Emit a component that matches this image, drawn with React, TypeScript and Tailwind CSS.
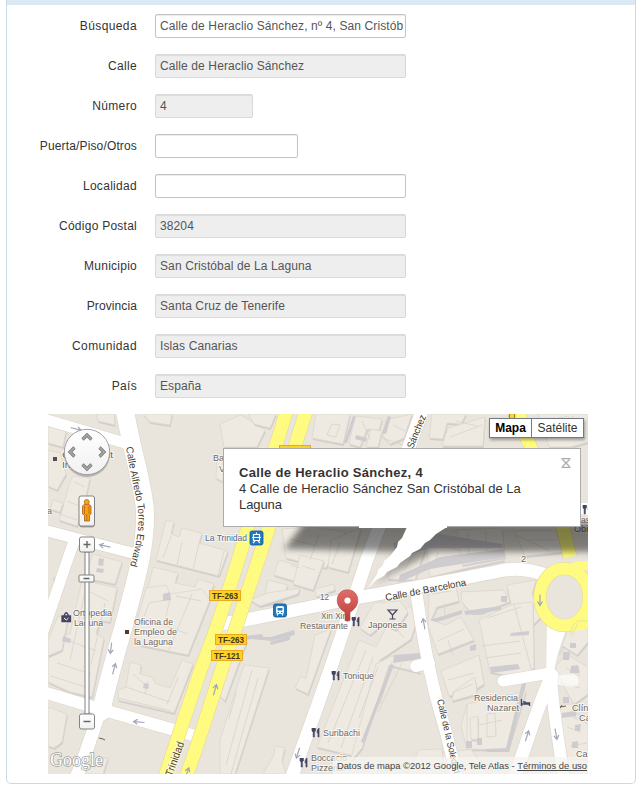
import React from "react";

const FONT = "font-['Liberation_Sans',Arial,sans-serif]";

type Field = { label: string; value: string; width: string; tracking: string; disabled: boolean };

const fields: Field[] = [
  { label: "Búsqueda", value: "Calle de Heraclio Sánchez, nº 4, San Cristób", width: "w-[251px]", tracking: "tracking-[0.4px]", disabled: false },
  { label: "Calle", value: "Calle de Heraclio Sánchez", width: "w-[251px]", tracking: "tracking-[0.35px]", disabled: true },
  { label: "Número", value: "4", width: "w-[98px]", tracking: "tracking-[0.35px]", disabled: true },
  { label: "Puerta/Piso/Otros", value: "", width: "w-[143px]", tracking: "tracking-[0.15px]", disabled: false },
  { label: "Localidad", value: "", width: "w-[251px]", tracking: "tracking-[0.3px]", disabled: false },
  { label: "Código Postal", value: "38204", width: "w-[251px]", tracking: "tracking-[0.25px]", disabled: true },
  { label: "Municipio", value: "San Cristóbal de La Laguna", width: "w-[251px]", tracking: "tracking-[0.25px]", disabled: true },
  { label: "Provincia", value: "Santa Cruz de Tenerife", width: "w-[251px]", tracking: "tracking-[0.1px]", disabled: true },
  { label: "Comunidad", value: "Islas Canarias", width: "w-[251px]", tracking: "tracking-[0.4px]", disabled: true },
  { label: "País", value: "España", width: "w-[251px]", tracking: "tracking-[0.3px]", disabled: true },
];

function FormRow({ label, value, width, tracking, disabled }: Field) {
  return (
    <div className="flex h-6 items-center gap-[18px]">
      <span className={`w-[130px] whitespace-nowrap text-right text-[12px] leading-6 text-[#333] ${tracking}`}>{label}</span>
      <div
        className={`flex h-6 items-center rounded-[2px] border pl-1 pr-0.5 ${width} ${
          disabled
            ? "border-[#d9d9d9] bg-[#eee] shadow-[inset_0_1px_1px_rgba(0,0,0,0.08)]"
            : "border-[#c4c4c4] bg-white shadow-[inset_0_1px_1px_rgba(0,0,0,0.08)]"
        }`}
      >
        <span className="w-full overflow-hidden whitespace-nowrap text-[12px] leading-5 tracking-[0.11px] text-[#555]">{value}</span>
      </div>
    </div>
  );
}

const buildings: string[] = [
  "48,426 66,431 63,447 48,443",
  "48,450 60,453 66,474 57,490 48,486",
  "73,476 90,478 82,514 77,526 59,520 70,482",
  "53,500 63,503 60,512 50,509",
  "96,414 114,414 115,425 98,421",
  "143,414 172,414 170,425 150,422",
  "217,460 223,455 223,482 216,478",
  "220,424 241,415 265,430 257,447 224,447",
  "248,414 276,414 270,428 254,424",
  "166,520 174,522 171,534 179,537 182,528 202,533 199,543 228,551 219,576 156,560",
  "153,567 178,573 175,583 195,587 198,579 214,584 207,606 147,592",
  "93,554 122,562 115,584 84,578",
  "82,580 117,588 110,622 100,620 96,634 104,638 92,697 70,692 48,682 48,660 60,636 70,634",
  "48,640 58,616 68,618 62,650 48,656",
  "146,588 166,585 170,594 202,589 210,600 188,655 140,645 134,632",
  "130,662 141,665 140,674 152,677 156,684 170,688 182,660 193,664 174,713 118,700 118,690 126,687",
  "48,707 67,714 62,742 54,748 48,746",
  "88,758 108,758 103,774 86,774",
  "316,414 350,414 343,444 312,438",
  "355,416 382,419 379,430 367,429 360,447 349,444",
  "371,429 382,431 378,447 366,447",
  "386,420 412,414 404,438 390,444 383,436",
  "432,414 466,414 461,424 447,423 443,439 429,438",
  "448,428 485,417 483,446 442,446",
  "538,414 588,414 588,442 571,447 549,447",
  "550,420 568,416 573,430 556,436",
  "282,529 313,527 345,532 326,568 286,558",
  "331,540 361,528 348,572 328,567",
  "279,560 303,567 297,582 274,575",
  "268,580 288,585 281,602 262,605",
  "300,555 324,561 313,590 293,584",
  "405,545 425,550 415,580 387,579",
  "426,543 457,550 489,549 505,560 463,569 430,577",
  "457,530 502,528 505,557 462,565",
  "514,531 556,531 563,552 525,556",
  "507,585 536,580 532,594 542,616 532,626 512,622",
  "250,600 267,593 300,588 298,594 260,606",
  "315,589 334,584 335,590 316,597",
  "220,619 235,633 247,641 225,701 220,696",
  "244,665 269,668 235,774 220,774 220,740",
  "315,635 331,629 308,694 295,688 301,676 306,679",
  "275,746 285,748 282,760 286,774 263,774 274,755",
  "359,640 376,647 390,620 410,606 417,620 411,639 380,660 354,756 317,747",
  "374,603 400,601 408,612 396,630 383,624 370,635 360,628",
  "376,664 392,656 408,657 421,673 389,665 362,748 350,762",
  "429,590 456,587 459,601 437,607 431,620 446,625 461,617 474,640 438,654 428,626",
  "461,592 503,590 511,601 481,613 471,613 462,602",
  "479,620 513,604 533,602 534,668 520,678 490,672",
  "441,671 479,655 484,684 476,689 449,696",
  "454,691 475,677 477,694 452,701",
  "467,704 526,691 508,750 467,749 461,726",
  "470,718 478,716 478,740 471,739",
  "434,755 471,749 488,774 437,774",
  "419,750 442,749 444,774 407,774",
  "571,620 588,620 588,642 577,655 563,646 559,655",
  "555,667 566,654 588,667 588,694 574,704 565,689",
  "559,704 575,704 574,718 588,724 588,774 571,774 562,733",
];

const creases: string[] = [
  "M74 482L85 487M67 501L79 506M60 514L77 520",
  "M171 536L163 558M182 542L177 565M199 543L193 570M224 551L218 576",
  "M84 589L108 601M76 615L100 622M67 640L96 651M57 663L91 674M51 676L89 688M85 592L70 660M105 603L91 665",
  "M149 603L170 599L164 625L142 622ZM176 596L201 601M192 594L169 650M164 625L188 634",
  "M126 687L170 702M133 674L149 688M148 681L145 694M178 677L167 704M118 698L171 711",
  "M332 424L340 425 336 437 327 435ZM362 421L370 439M393 425L405 431M456 421L477 426",
  "M450 437L482 425M551 439L580 424M572 416L585 439",
  "M290 539L318 546M319 534L310 560M340 543L332 564M291 565L300 568M303 566L315 570",
  "M414 553L405 569M438 551L434 569M468 534L469 560M486 531L487 560M528 540L556 540",
  "M252 670L226 765M258 678L231 774M236 693L229 719",
  "M366 650L328 743M373 657L341 748M392 662L380 704M378 667L359 718M402 663L378 712M393 624L404 638",
  "M432 594L451 591M444 603L445 616M438 641L464 629M448 640L453 655M487 618L521 607M482 646L520 641M485 658L521 653M514 604L532 672M510 604L508 589",
  "M448 680L474 673M452 693L473 684M467 704L467 750M487 714L495 713 496 736 487 737ZM479 725L502 720",
  "M566 668L580 676M561 683L580 688M570 711L583 716M567 727L581 732M570 746L587 743M568 759L586 760",
  "M382 438L412 448M394 451L410 459M516 535L550 551",
];

// Roof edges in deep shade and small roof structures.
const shades: string[] = [
  "248,637 271,637 294,630 295,635 272,641 252,639",
  "393,543 427,532 502,544 503,548 430,548 397,559",
  "400,575 440,557 504,549 505,557 430,569 398,583",
  "430,620 462,610 462,614 437,622",
  "464,611 501,606 501,610 466,615",
  "490,667 518,664 520,669 491,673",
  "501,596 507,596 507,602 501,602",
  "394,655 421,653 421,659 393,663",
  "391,664 394,665 364,743 361,742",
  "523,679 527,680 509,752 487,752 486,749 506,748",
  "511,633 529,631 529,635 510,636",
  "470,646 476,644 476,650 470,651",
  "466,741 472,741 472,748 466,748",
  "477,738 482,738 482,745 477,745",
  "570,643 576,643 576,648 570,648",
  "563,652 570,652 569,660 563,660",
  "571,666 578,665 580,673 570,673",
  "563,697 569,697 569,703 563,703",
  "562,713 576,711 576,716 562,718",
  "575,725 581,724 580,731 575,731",
  "572,742 578,741 578,748 572,748",
  "54,577 63,579 62,583 53,581",
  "99,558 104,559 103,566 98,565",
  "97,568 104,569 103,573 96,572",
  "63,636 71,639 70,643 62,641",
  "163,594 170,592 171,600 163,601",
  "144,683 149,684 148,689 143,688",
  "353,416 356,417 347,443 344,443",
  "356,435 367,438 366,442 355,439",
  "388,416 391,417 386,434 382,433",
  "413,526 423,528 422,535 410,533",
  "270,642 290,636 290,640 271,645",
  "245,636 262,634 263,637 246,640",
];

type Road = { d: string; w: number };

const roads: Road[] = [
  { d: "M40 418L125 443", w: 11 },
  { d: "M40 529L132 553", w: 11 },
  { d: "M75 539C66 562 58 590 42 634", w: 11 },
  { d: "M40 691L100 709L192 735", w: 12 },
  { d: "M124 405C131 450 144 485 145 512C146 550 134 586 124 625C114 660 107 685 101 712", w: 18 },
  { d: "M104 696C97 720 89 746 76 778", w: 13 },
  { d: "M220 624C265 617 300 609 345 600C400 590 455 580 505 570Q525 567 548 576", w: 13 },
  { d: "M424 405C403 465 385 512 366 562C348 618 324 690 289 784", w: 13 },
  { d: "M417 597C423 640 433 690 444 725L458 780", w: 12 },
  { d: "M416 666L429 663", w: 12 },
  { d: "M503 681L550 673", w: 11 },
  { d: "M552 675C540 700 532 727 514 779", w: 13 },
  { d: "M551 675C552 705 558 735 564 780", w: 12 },
];

const yellowRoads: Road[] = [
  { d: "M288 405C277 447 260 490 247 531C234 574 220 622 202 666C190 701 180 730 164 780", w: 13 },
  { d: "M308 405C295 447 282 485 268 530C252 580 234 632 219 678C207 714 199 741 185 780", w: 13 },
  { d: "M517 405C522 430 535 460 547 480C558 504 563 528 570 557", w: 13 },
];

type LabelProps = { x: number; y: number; w: number; children: string; rotate?: number; size?: number; color?: string };

function Label({ x, y, w, children, rotate = 0, size = 9.6, color = "#716762" }: LabelProps) {
  return (
    <text
      x={x}
      y={y}
      textLength={w}
      lengthAdjust="spacingAndGlyphs"
      fontSize={size}
      fill={color}
      stroke="#fff"
      strokeWidth={2}
      strokeOpacity={0.65}
      paintOrder="stroke"
      transform={rotate ? `rotate(${rotate} ${x} ${y})` : undefined}
    >
      {children}
    </text>
  );
}

function RoadShield({ x, y, children }: { x: number; y: number; children: string }) {
  return (
    <g>
      <rect x={x + 0.5} y={y + 0.5} width={31} height={10} fill="#fcd12a" stroke="#e9ab1c" />
      <text x={x + 3} y={y + 9} textLength={26} lengthAdjust="spacingAndGlyphs" fontSize={9} fontWeight="bold" fill="#42371b">{children}</text>
    </g>
  );
}

function Fork({ x, y }: { x: number; y: number }) {
  return (
    <path
      transform={`translate(${x} ${y})`}
      d="M0 0V3L1.2 4V9H2.3V4L3.4 3V0M1.7 0V4M7 0Q5 1 5 4.7H6V9H7Z"
      fill="#454463"
      stroke="#454463"
      strokeWidth=".7"
    />
  );
}

function Direction({ x, y, angle }: { x: number; y: number; angle: number }) {
  return <path transform={`translate(${x} ${y}) rotate(${angle})`} d="M-5.5 0H5M1.5-2.5L5.5 0L1.5 2.5" fill="none" stroke="#a0a7b6" strokeWidth="1.2" />;
}

function MapTiles() {
  return (
    <svg className={`block h-[360px] w-[540px] ${FONT}`} viewBox="48 414 540 360">
      <defs>
        <filter id="soft" x="-10%" y="-60%" width="120%" height="220%">
          <feGaussianBlur stdDeviation="3" />
        </filter>
        <linearGradient id="fade" x1="0" y1="525" x2="0" y2="588" gradientUnits="userSpaceOnUse">
          <stop offset="0" stopOpacity=".53" />
          <stop offset=".4" stopOpacity=".44" />
          <stop offset="1" stopOpacity=".08" />
        </linearGradient>
        <linearGradient id="pin" x1="0" y1="590" x2="0" y2="620" gradientUnits="userSpaceOnUse">
          <stop stopColor="#df6d69" />
          <stop offset="1" stopColor="#bd4039" />
        </linearGradient>
      </defs>
      <rect x="48" y="414" width="540" height="360" fill="#e9e5dc" />
      {buildings.map((p, i) => (
        <g key={i} strokeLinejoin="round">
          <polygon points={p} fill="#d1cecf" transform="translate(.8 2)" />
          <polygon points={p} fill="#eeeae2" stroke="#ddd7cd" strokeWidth=".8" />
        </g>
      ))}
      {creases.map((d, i) => (
        <path key={i} d={d} fill="none" stroke="#dad5cc" strokeWidth=".9" />
      ))}
      {shades.map((p, i) => (
        <polygon key={i} points={p} fill="#cfccd0" />
      ))}
      <g fill="none" strokeLinecap="round">
        {roads.map((r, i) => (
          <path key={i} d={r.d} stroke="#dcd6cd" strokeWidth={r.w + 1.2} />
        ))}
        {roads.map((r, i) => (
          <path key={i} d={r.d} stroke="#fff" strokeWidth={r.w} />
        ))}
      </g>
      <path d="M547 626H567C562 644 554 655 553 690H546Z" fill="#fff" />
      <path d="M93 704L105 694L110 713L101 723Z" fill="#fff" />
      <path d="M552 677Q574 672 577 676Q582 684 573 687L553 684Z" fill="#fff" opacity=".65" />
      <path d="M581 514V503H588V515Z" fill="#fff" />
      <g fill="none">
        {yellowRoads.map((r, i) => (
          <path key={i} d={r.d} stroke="#e5d7a1" strokeWidth={r.w + 1.2} />
        ))}
        <ellipse cx="564.5" cy="597" rx="24.5" ry="28.5" stroke="#e5d7a1" strokeWidth="13" />
        {yellowRoads.map((r, i) => (
          <path key={i} d={r.d} stroke="#fffb80" strokeWidth={r.w} />
        ))}
        <ellipse cx="564.5" cy="597" rx="24.5" ry="28.5" stroke="#fffb80" strokeWidth="12" />
        <path d="M573 567Q581 565 592 566M570 626Q583 627 592 622" stroke="#fffb80" strokeWidth="9" />
      </g>
      <path d="M570 634Q573 622 578 621H588M571 637L578 623" fill="none" stroke="#e9e1a6" />

      <Direction x={76} y={429} angle={16} />
      <Direction x={105} y={546} angle={192} />
      <Direction x={111} y={648} angle={97} />
      <Direction x={114} y={669} angle={-75} />
      <Direction x={139} y={722} angle={185} />
      <Direction x={215} y={690} angle={-74} />
      <Direction x={298} y={753} angle={107} />
      <Direction x={424} y={624} angle={-100} />
      <Direction x={540} y={600} angle={90} />
      <Direction x={527} y={736} angle={-73} />
      <Direction x={556} y={734} angle={80} />
      <Direction x={187} y={773} angle={-70} />

      <Label x={213} y={461} w={11}>Ba</Label>
      <Label x={219} y={472} w={6}>V</Label>
      <rect x="53" y="457" width="4" height="4" fill="#574c49" />
      <Label x={62} y={458} w={51}>Col. Infant</Label>
      <Label x={62} y={468} w={28}>Inmac</Label>
      <Label x={47} y={514} w={5}>a</Label>
      <Label x={205} y={541} w={42} color="#536c91">La Trinidad</Label>
      <Label x={73} y={616} w={39}>Ortopedia</Label>
      <Label x={74} y={626} w={29}>Laguna</Label>
      <Label x={134} y={625} w={39}>Oficina de</Label>
      <Label x={134} y={635} w={43}>Empleo de</Label>
      <Label x={134} y={645} w={39}>la Laguna</Label>
      <rect x="125" y="630" width="4" height="4" fill="#513a35" />
      <Label x={320} y={600} w={9} size={8.5}>12</Label>
      <Label x={521} y={562} w={5} size={8.5}>2</Label>
      <Label x={321} y={619} w={26}>Xin Xin</Label>
      <Label x={300} y={629} w={48}>Restaurante</Label>
      <Label x={368} y={628} w={39}>Japonesa</Label>
      <Label x={343} y={679} w={31}>Tonique</Label>
      <Label x={323} y={736} w={37}>Suribachi</Label>
      <Label x={311} y={761} w={36}>Boccacio</Label>
      <Label x={311} y={771} w={32}>Pizzeria</Label>
      <Label x={474} y={701} w={44}>Residencia</Label>
      <Label x={487} y={711} w={32}>Nazaret</Label>
      <Label x={572} y={711} w={28}>Clínica</Label>
      <Label x={579} y={721} w={22}>Cánd</Label>
      <Label x={576} y={757} w={16}>Cas</Label>
      <Label x={581} y={523} w={14}>ase</Label>
      <Label x={574} y={532} w={29}>Obispo</Label>

      <g stroke="#fff" strokeWidth="2" strokeOpacity=".8" paintOrder="stroke" fill="#40382f" fontSize="10">
        <path id="alfredo-path" d="M126 447C132 484 137 498 138 511C140 532 135 550 126 579" fill="none" stroke="none" />
        <text textLength="121" lengthAdjust="spacingAndGlyphs">
          <textPath href="#alfredo-path" textLength="121" lengthAdjust="spacingAndGlyphs">Calle Alfredo Torres Edward</textPath>
        </text>
      </g>
      <Label x={413} y={449} w={35} rotate={-68} size={10} color="#40382f">Sánchez</Label>
      <Label x={386} y={601} w={82} rotate={-11} size={10} color="#40382f">Calle de Barcelona</Label>
      <Label x={437} y={700} w={76} rotate={77} size={9.5} color="#40382f">Calle de la Soledad</Label>
      <Label x={172} y={777} w={36} rotate={-70} size={11} color="#50461f">Trinidad</Label>

      <RoadShield x={279} y={445}>TF-263</RoadShield>
      <RoadShield x={209} y={590}>TF-263</RoadShield>
      <RoadShield x={215} y={634}>TF-263</RoadShield>
      <RoadShield x={211} y={650}>TF-121</RoadShield>
      <circle cx="512" cy="416" r="3" fill="#fcd12a" stroke="#91751d" />

      <g stroke="#fff" strokeWidth=".8">
        <rect x="250" y="531" width="13" height="14" rx="2" fill="#2279bd" stroke="#0e5c9a" />
        <path d="M253.5 534.5H259.5V540.5H253.5ZM256.5 532.5V534.5M252 537.5H261M253 543L255 541M260 543L258 541" fill="none" strokeWidth="1.2" />
        <rect x="273.5" y="604" width="13" height="13" rx="2" fill="#2279bd" stroke="#0e5c9a" />
        <rect x="276.5" y="606.5" width="7" height="7" rx="1" fill="#fff" />
        <path d="M277.5 608H282.5V610.5H277.5ZM277.5 612H279V613H277.5ZM281 612H282.5V613H281Z" fill="#2279bd" stroke="none" />
        <path d="M277.5 613V615.5M282.5 613V615.5" strokeWidth="1.3" />
      </g>

      <Fork x={352} y={617} />
      <Fork x={332} y={671} />
      <Fork x={312} y={728} />
      <Fork x={300} y={758} />
      <path d="M388 610H397L392.5 615ZM392.5 615V618.5M389.5 619H395.5" fill="none" stroke="#454463" strokeWidth="1.2" />
      <path d="M521.5 699V706M521.5 704H529.5V706M523 702H525V703H529.5V704" fill="none" stroke="#454463" strokeWidth="1.4" />
      <path d="M62 616H70.5V621.5H62ZM64 616Q66.3 609.5 68.5 616" fill="none" stroke="#454463" strokeWidth="1.3" />
      <path d="M62 616H70.5V621.5H62Z" fill="#454463" />
      <path d="M64 618L66.3 620L68.5 618" fill="none" stroke="#fff" />
      <path d="M99 738L103 739L105 740M560 707L566 706M562 705L560 708" fill="none" stroke="#67605a" />
      <Fork x={583} y={505} />

      <polygon points="304,523 594,523 594,552 433,552 372,587 399,552 284,549" fill="url(#fade)" filter="url(#soft)" />
      <path d="M407 527L402 538L398 542L397 547L390 556L384 561L383 565L378 570L377 574L368 588L376 580L384 576L387 572L397 567L400 563L410 556L412 553L420 549L425 543L430 540L436 534L447 527Z" fill="#fff" />

      <path d="M347.5 589.8C341 589.8 337.2 594.7 337.2 600.2C337.2 606 341 609.5 345 612.4V620.5Q347.5 622 350 620.5V612.4C354 609.5 357.8 606 357.8 600.2C357.8 594.7 354 589.8 347.5 589.8Z" fill="url(#pin)" stroke="#b74c45" strokeWidth=".6" />
      <circle cx="347.5" cy="600.5" r="3.1" fill="#fff" />

      <rect x="333" y="757" width="255" height="17" fill="#f6f4f0" opacity=".75" />
      <text x="50" y="766" textLength="53" lengthAdjust="spacingAndGlyphs" fontFamily="Liberation Serif, serif" fontSize="18" fill="#fff" stroke="#858585" strokeWidth="1.5" strokeOpacity=".75" paintOrder="stroke">Google</text>
    </svg>
  );
}

function PanControls() {
  return (
    <svg className="absolute left-4 top-3 h-[320px] w-[50px]" viewBox="64 426 50 320">
      <defs>
        <linearGradient id="button" x1="0" y1="0" x2="0" y2="1">
          <stop stopColor="#fff" />
          <stop offset="1" stopColor="#f1f1f1" />
        </linearGradient>
      </defs>
      <circle cx="87" cy="454" r="23" fill="#555" opacity=".35" />
      <circle cx="87" cy="452" r="22.7" fill="url(#button)" stroke="#999" strokeWidth=".9" />
      <path d="M82.5 439.5L87 435L91.5 439.5M82.5 464.5L87 469L91.5 464.5M74.5 447.5L70 452L74.5 456.5M99.5 447.5L104 452L99.5 456.5" fill="none" stroke="#777" strokeWidth="3.2" />
      <path d="M82.5 439.5L87 435L91.5 439.5M82.5 464.5L87 469L91.5 464.5M74.5 447.5L70 452L74.5 456.5M99.5 447.5L104 452L99.5 456.5" fill="none" stroke="#aaa" strokeWidth="1.6" />
      <g fill="url(#button)" stroke="#777" strokeWidth=".9">
        <rect x="79.5" y="497" width="15" height="30.5" rx="2.5" fill="#777" stroke="none" opacity=".55" />
        <rect x="79" y="496" width="15.5" height="30" rx="2" />
        <rect x="85" y="552" width="4" height="162" fill="#fff" />
        <rect x="79.5" y="537" width="15" height="15" rx="2" />
        <rect x="79" y="575" width="15" height="7" rx="1" />
        <rect x="79.5" y="714" width="15" height="15" rx="2" />
      </g>
      <path d="M83.5 544.5H90.5M87 541V548M83.5 578.5H89.5M83.5 721.5H90.5" fill="none" stroke="#666" strokeWidth="1.4" />
      <path d="M82.5 506L84 504.5H89L91 506V514L89.5 515V521H84.5V515L82.5 514ZM84.5 506V514M89 506V514M86.8 514V521" fill="#f7a016" stroke="#b76b1d" strokeWidth=".9" />
      <circle cx="86.7" cy="502" r="2.5" fill="#f8a31b" stroke="#b76b1d" strokeWidth=".8" />
    </svg>
  );
}

function InfoWindow() {
  return (
    <div className="absolute left-[175px] top-[34px] h-[79px] w-[358px] border border-[#ababab] bg-white px-[15px] pt-4 text-[13px] leading-4 text-[#333]">
      <div className="whitespace-nowrap font-bold tracking-[0.3px]">Calle de Heraclio Sánchez, 4</div>
      <div className="whitespace-nowrap">4 Calle de Heraclio Sánchez San Cristóbal de La</div>
      <div className="tracking-[-0.1px]">Laguna</div>
      <div className="absolute -bottom-0.5 left-[135px] h-0.5 w-[88px] bg-white" />
      <svg className="absolute right-[9px] top-[9px] size-[10px]" viewBox="0 0 10 10">
        <path d="M.5 .7H9.5M.5 9.3H9.5M1.5 1.5L8.5 8.5M8.5 1.5L1.5 8.5" fill="none" stroke="#aaa" strokeWidth="1.3" />
      </svg>
    </div>
  );
}

export default function App() {
  return (
    <main className={`h-[789px] w-[640px] overflow-hidden bg-white ${FONT}`}>
      <section className="ml-1.5 h-[784px] w-[630px] overflow-hidden rounded-b-[5px] border-x border-b border-[#c5dce8] bg-white">
        <div className="h-[5px] bg-[#dce8f4]" />
        <form className="flex flex-col gap-4 pt-[9px]">
          {fields.map((field) => (
            <FormRow key={field.label} {...field} />
          ))}
        </form>
        <div className="relative ml-[41px] mt-4 h-[360px] w-[540px] overflow-hidden">
          <MapTiles />
          <PanControls />
          <InfoWindow />
          <div className="absolute left-[441px] top-1 flex h-5 w-[95px] border border-[#717b87] bg-white text-[12px] leading-[18px] text-[#333] shadow-[1px_2px_3px_rgba(0,0,0,0.35)]">
            <span className="w-[42px] border-r border-[#717b87] text-center font-bold text-black">Mapa</span>
            <span className="flex-1 text-center">Satélite</span>
          </div>
          <div className="absolute bottom-0 right-px flex h-[17px] items-center whitespace-pre text-[9.4px] leading-[17px] text-[#444]">
            <span>Datos de mapa ©2012 Google, Tele Atlas - </span>
            <span className="underline">Términos de uso</span>
          </div>
        </div>
      </section>
    </main>
  );
}
